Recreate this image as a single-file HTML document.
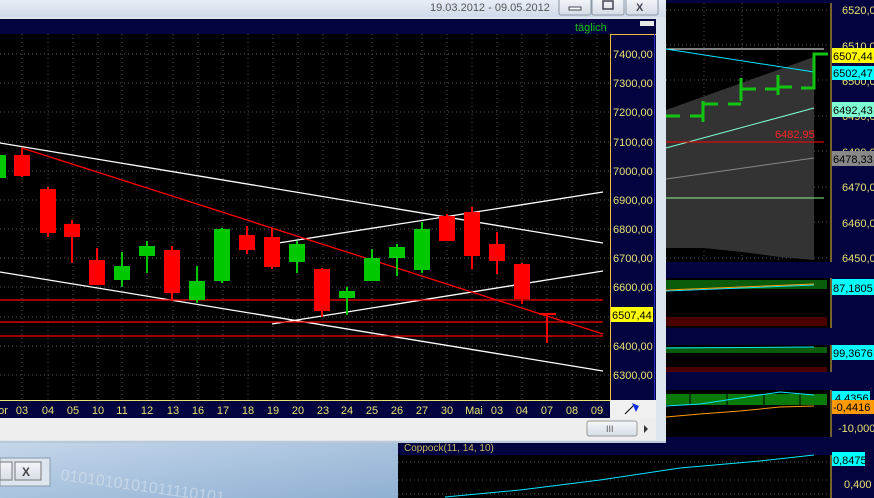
<!DOCTYPE html>
<html><head><meta charset="utf-8"><style>
html,body{margin:0;padding:0;background:#000;overflow:hidden}
svg{display:block}
text{font-family:"Liberation Sans",sans-serif}
</style></head><body>
<svg width="874" height="498" viewBox="0 0 874 498" xmlns="http://www.w3.org/2000/svg">
<defs>
<linearGradient id="tb" x1="0" y1="0" x2="0" y2="1"><stop offset="0" stop-color="#e8eef6"/><stop offset="1" stop-color="#cfdbe9"/></linearGradient>
<linearGradient id="bg" x1="0" y1="0" x2="1" y2="1"><stop offset="0" stop-color="#c4d6ea"/><stop offset="1" stop-color="#8fb0d2"/></linearGradient>
<linearGradient id="btn" x1="0" y1="0" x2="0" y2="1"><stop offset="0" stop-color="#f4f6f9"/><stop offset="1" stop-color="#d6dde6"/></linearGradient>
</defs>
<rect width="874" height="498" fill="#000"/>

<!-- RIGHT PANEL -->
<rect x="664" y="0" width="210" height="498" fill="#03033f"/>
<rect x="666" y="3" width="165" height="259" fill="#000"/>
<g stroke="#555" stroke-dasharray="1,3">
<line x1="704" y1="3" x2="704" y2="262"/><line x1="742" y1="3" x2="742" y2="262"/><line x1="778" y1="3" x2="778" y2="262"/>
<line x1="666" y1="10" x2="830" y2="10"/><line x1="666" y1="45" x2="830" y2="45"/><line x1="666" y1="80" x2="830" y2="80"/><line x1="666" y1="116" x2="830" y2="116"/><line x1="666" y1="151" x2="830" y2="151"/><line x1="666" y1="187" x2="830" y2="187"/><line x1="666" y1="222" x2="830" y2="222"/><line x1="666" y1="258" x2="830" y2="258"/>
</g>
<polygon points="666,110 814,57 814,260 780,257 742,252 704,248 666,248" fill="#333"/>
<line x1="666" y1="49" x2="824" y2="49" stroke="#fff" stroke-width="1"/>
<line x1="666" y1="49" x2="814" y2="72" stroke="#00e5ff" stroke-width="1"/>
<line x1="666" y1="148" x2="814" y2="108" stroke="#7fffd4" stroke-width="1"/>
<line x1="666" y1="142" x2="824" y2="142" stroke="#f00" stroke-width="1"/>
<line x1="666" y1="179" x2="814" y2="158" stroke="#888" stroke-width="1"/>
<line x1="666" y1="198" x2="824" y2="198" stroke="#90ee90" stroke-width="1"/>
<g stroke="#12c412" stroke-width="3" fill="none">
<path d="M666 116 H680 M690 116 H703 M703 101 V122 M703 104 H718 M728 104 H741 M741 78 V101 M741 89 H756 M765 89 H778 M778 75 V95 M778 87 H792 M801 88 H814 V54 H828"/>
</g>
<text x="775" y="138" fill="#f22" font-size="11">6482,95</text>
<rect x="831" y="0" width="43" height="262" fill="#03033f"/>
<line x1="831" y1="3" x2="831" y2="262" stroke="#e8c040"/>
<g fill="#e8e070" font-size="11">
<text x="842" y="14">6520,0</text><text x="842" y="50">6510,0</text><text x="842" y="85">6500,0</text><text x="842" y="120">6490,0</text><text x="842" y="156">6480,0</text><text x="842" y="191">6470,0</text><text x="842" y="227">6460,0</text><text x="842" y="262">6450,0</text>
</g>
<rect x="832" y="48" width="42" height="15" fill="#ffff00"/><text x="833" y="60" fill="#000" font-size="11">6507,44</text>
<rect x="832" y="66" width="42" height="14" fill="#00ffff"/><text x="833" y="77" fill="#000" font-size="11">6502,47</text>
<rect x="832" y="102" width="42" height="15" fill="#7fffd4"/><text x="833" y="114" fill="#000" font-size="11">6492,43</text>
<rect x="832" y="151" width="42" height="15" fill="#888"/><text x="833" y="163" fill="#000" font-size="11">6478,33</text>

<!-- chart 2 -->
<rect x="666" y="278" width="165" height="50" fill="#000"/>
<rect x="666" y="280" width="161" height="9" fill="#0a5c0a"/>
<rect x="666" y="317" width="161" height="9" fill="#4a0000"/>
<line x1="666" y1="291" x2="814" y2="285" stroke="#00e5ff"/>
<line x1="666" y1="290" x2="814" y2="284" stroke="#ff9900"/>
<rect x="832" y="279" width="42" height="16" fill="#00ffff"/><text x="833" y="292" fill="#000" font-size="11">87,1805</text>
<line x1="831" y1="278" x2="831" y2="328" stroke="#e8c040"/>
<!-- chart 3 -->
<rect x="666" y="345" width="165" height="27" fill="#000"/>
<rect x="666" y="347" width="161" height="6" fill="#0a5c0a"/>
<rect x="666" y="367" width="161" height="5" fill="#4a0000"/>
<line x1="666" y1="348" x2="814" y2="347" stroke="#00e5ff"/>
<rect x="832" y="345" width="42" height="15" fill="#00ffff"/><text x="833" y="357" fill="#000" font-size="11">99,3676</text>
<line x1="831" y1="345" x2="831" y2="372" stroke="#e8c040"/>
<!-- chart 4 -->
<rect x="666" y="390" width="165" height="47" fill="#000"/>
<rect x="666" y="394" width="161" height="11" fill="#0a7a0a"/>
<g stroke="#000"><line x1="690" y1="394" x2="690" y2="405"/><line x1="727" y1="394" x2="727" y2="405"/><line x1="764" y1="394" x2="764" y2="405"/><line x1="800" y1="394" x2="800" y2="405"/></g>
<polyline points="666,406 700,404 740,398 780,392 814,395" fill="none" stroke="#00e5ff"/>
<polyline points="666,417 700,414 740,411 780,407 814,406" fill="none" stroke="#ff9900"/>
<rect x="832" y="391" width="38" height="12" fill="#00ffff"/><text x="835" y="402" fill="#000" font-size="11">4,4356</text>
<rect x="832" y="400" width="42" height="14" fill="#ff9900"/><text x="833" y="411" fill="#000" font-size="11">-0,4416</text>
<text x="838" y="432" fill="#e8e070" font-size="11">-10,000</text>
<line x1="831" y1="390" x2="831" y2="437" stroke="#e8c040"/>

<!-- coppock -->
<rect x="398" y="443" width="476" height="55" fill="#03033f"/>
<text x="404" y="451" fill="#c8b860" font-size="10">Coppock(11, 14, 10)</text>
<rect x="398" y="455" width="433" height="43" fill="#000"/>
<g stroke="#555" stroke-dasharray="1,3"><line x1="398" y1="462" x2="830" y2="462"/><line x1="398" y1="480" x2="830" y2="480"/><line x1="398" y1="494" x2="830" y2="494"/></g>
<polyline points="445,497 520,490 600,480 680,468 760,461 814,455" fill="none" stroke="#00e5ff"/>
<line x1="831" y1="455" x2="831" y2="498" stroke="#e8c040"/>
<rect x="832" y="452" width="33" height="14" fill="#00ffff"/><text x="833" y="464" fill="#000" font-size="11">0,8475</text>
<text x="844" y="488" fill="#e8e070" font-size="11">0,400</text>

<!-- desktop bg lower-left -->
<rect x="0" y="443" width="398" height="55" fill="url(#bg)"/>
<text x="60" y="480" fill="#d8e4f0" font-size="16" opacity=".6" transform="rotate(8 60 480)">0101010101011110101</text>
<rect x="0" y="458" width="50" height="28" fill="#dde6ef" stroke="#8899aa"/>
<rect x="0" y="462" width="12" height="18" fill="url(#btn)" stroke="#777"/>
<rect x="15" y="462" width="26" height="18" fill="url(#btn)" stroke="#777"/>
<text x="22" y="476" fill="#444" font-size="12" font-weight="bold">X</text>

<!-- MAIN WINDOW -->
<rect x="0" y="0" width="666" height="443" fill="#dde6ef"/>
<rect x="0" y="0" width="666" height="17" fill="url(#tb)"/>
<text x="430" y="11" fill="#555" font-size="11">19.03.2012 - 09.05.2012</text>
<rect x="559" y="-2" width="32" height="17" rx="2" fill="url(#btn)" stroke="#8a97a6"/>
<rect x="569" y="7" width="12" height="3" fill="#fff" stroke="#445"/>
<rect x="592" y="-2" width="32" height="17" rx="2" fill="url(#btn)" stroke="#8a97a6"/>
<rect x="603" y="1" width="10" height="8" fill="none" stroke="#445" stroke-width="1.5"/>
<rect x="626" y="-2" width="32" height="17" rx="2" fill="url(#btn)" stroke="#8a97a6"/>
<text x="636" y="11" fill="#445" font-size="11" font-weight="bold">X</text>
<rect x="0" y="19" width="656" height="15" fill="#03033f"/>
<text x="575" y="31" fill="#10c010" font-size="11">täglich</text>
<rect x="640" y="21" width="14" height="5" fill="#e8e8e8"/>
<rect x="0" y="34" width="610" height="366" fill="#000"/>
<g stroke="#555" stroke-dasharray="1,3">
<line x1="22" y1="34" x2="22" y2="400"/><line x1="48" y1="34" x2="48" y2="400"/><line x1="73" y1="34" x2="73" y2="400"/><line x1="98" y1="34" x2="98" y2="400"/><line x1="122" y1="34" x2="122" y2="400"/><line x1="147" y1="34" x2="147" y2="400"/><line x1="173" y1="34" x2="173" y2="400"/><line x1="198" y1="34" x2="198" y2="400"/><line x1="223" y1="34" x2="223" y2="400"/><line x1="248" y1="34" x2="248" y2="400"/><line x1="273" y1="34" x2="273" y2="400"/><line x1="298" y1="34" x2="298" y2="400"/><line x1="323" y1="34" x2="323" y2="400"/><line x1="347" y1="34" x2="347" y2="400"/><line x1="372" y1="34" x2="372" y2="400"/><line x1="397" y1="34" x2="397" y2="400"/><line x1="422" y1="34" x2="422" y2="400"/><line x1="447" y1="34" x2="447" y2="400"/><line x1="472" y1="34" x2="472" y2="400"/><line x1="497" y1="34" x2="497" y2="400"/><line x1="522" y1="34" x2="522" y2="400"/><line x1="547" y1="34" x2="547" y2="400"/><line x1="572" y1="34" x2="572" y2="400"/><line x1="597" y1="34" x2="597" y2="400"/>
<line x1="0" y1="54" x2="610" y2="54"/><line x1="0" y1="83" x2="610" y2="83"/><line x1="0" y1="112" x2="610" y2="112"/><line x1="0" y1="142" x2="610" y2="142"/><line x1="0" y1="171" x2="610" y2="171"/><line x1="0" y1="200" x2="610" y2="200"/><line x1="0" y1="229" x2="610" y2="229"/><line x1="0" y1="258" x2="610" y2="258"/><line x1="0" y1="287" x2="610" y2="287"/><line x1="0" y1="317" x2="610" y2="317"/><line x1="0" y1="346" x2="610" y2="346"/><line x1="0" y1="375" x2="610" y2="375"/>
</g>
<!-- trend lines -->
<g stroke="#fff" stroke-width="1.3">
<line x1="0" y1="143" x2="603" y2="243"/>
<line x1="0" y1="272" x2="603" y2="371"/>
<line x1="272" y1="244" x2="603" y2="192"/>
<line x1="272" y1="324" x2="603" y2="271"/>
</g>
<g stroke="#f00" stroke-width="1.3">
<line x1="22" y1="148" x2="603" y2="334"/>
<line x1="0" y1="300" x2="603" y2="300"/>
<line x1="0" y1="322" x2="603" y2="322"/>
<line x1="0" y1="336" x2="603" y2="336"/>
</g>
<!-- candles -->
<g fill="#f00" stroke="#f00" stroke-width="2">
<line x1="22" y1="148" x2="22" y2="177"/><rect x="14" y="155" width="16" height="21" stroke="none"/>
<line x1="48" y1="187" x2="48" y2="237"/><rect x="40" y="189" width="16" height="44" stroke="none"/>
<line x1="72" y1="220" x2="72" y2="263"/><rect x="64" y="224" width="16" height="13" stroke="none"/>
<line x1="97" y1="248" x2="97" y2="285"/><rect x="89" y="260" width="16" height="25" stroke="none"/>
<line x1="172" y1="246" x2="172" y2="301"/><rect x="164" y="250" width="16" height="43" stroke="none"/>
<line x1="247" y1="226" x2="247" y2="254"/><rect x="239" y="235" width="16" height="15" stroke="none"/>
<line x1="272" y1="228" x2="272" y2="269"/><rect x="264" y="237" width="16" height="30" stroke="none"/>
<line x1="322" y1="268" x2="322" y2="317"/><rect x="314" y="269" width="16" height="42" stroke="none"/>
<line x1="447" y1="214" x2="447" y2="241"/><rect x="439" y="216" width="16" height="25" stroke="none"/>
<line x1="472" y1="207" x2="472" y2="269"/><rect x="464" y="212" width="16" height="44" stroke="none"/>
<line x1="497" y1="232" x2="497" y2="274"/><rect x="489" y="244" width="16" height="17" stroke="none"/>
<line x1="522" y1="263" x2="522" y2="304"/><rect x="514" y="264" width="16" height="35" stroke="none"/>
<line x1="547" y1="314" x2="547" y2="343"/><line x1="539" y1="314" x2="556" y2="314"/>
</g>
<g fill="#00c800" stroke="#00c800" stroke-width="2">
<rect x="0" y="155" width="6" height="23" stroke="none"/>
<line x1="122" y1="252" x2="122" y2="287"/><rect x="114" y="266" width="16" height="14" stroke="none"/>
<line x1="147" y1="241" x2="147" y2="273"/><rect x="139" y="246" width="16" height="10" stroke="none"/>
<line x1="197" y1="266" x2="197" y2="303"/><rect x="189" y="281" width="16" height="19" stroke="none"/>
<line x1="222" y1="228" x2="222" y2="283"/><rect x="214" y="229" width="16" height="52" stroke="none"/>
<line x1="297" y1="241" x2="297" y2="273"/><rect x="289" y="244" width="16" height="18" stroke="none"/>
<line x1="347" y1="287" x2="347" y2="315"/><rect x="339" y="291" width="16" height="7" stroke="none"/>
<line x1="372" y1="249" x2="372" y2="281"/><rect x="364" y="258" width="16" height="23" stroke="none"/>
<line x1="397" y1="244" x2="397" y2="276"/><rect x="389" y="247" width="16" height="11" stroke="none"/>
<line x1="422" y1="222" x2="422" y2="273"/><rect x="414" y="229" width="16" height="41" stroke="none"/>
</g>
<!-- y axis -->
<rect x="610" y="34" width="46" height="366" fill="#03033f"/>
<line x1="610.5" y1="34" x2="610.5" y2="400" stroke="#e8c040"/>
<line x1="610" y1="34.5" x2="656" y2="34.5" stroke="#e8c040"/>
<line x1="654.5" y1="34" x2="654.5" y2="400" stroke="#2030c0"/>
<g fill="#e8e070" font-size="11">
<text x="613" y="58">7400,00</text><text x="613" y="87">7300,00</text><text x="613" y="116">7200,00</text><text x="613" y="146">7100,00</text><text x="613" y="175">7000,00</text><text x="613" y="204">6900,00</text><text x="613" y="233">6800,00</text><text x="613" y="262">6700,00</text><text x="613" y="291">6600,00</text><text x="613" y="350">6400,00</text><text x="613" y="379">6300,00</text>
</g>
<rect x="611" y="307" width="42" height="15" fill="#ffff00"/><text x="612" y="319" fill="#000" font-size="11">6507,44</text>
<!-- x axis -->
<rect x="0" y="400" width="610" height="18" fill="#03033f"/>
<line x1="0" y1="400.5" x2="610" y2="400.5" stroke="#e8e070"/>
<g fill="#e8e070" font-size="11" text-anchor="middle">
<text x="3" y="414">or</text><text x="22" y="414">03</text><text x="48" y="414">04</text><text x="73" y="414">05</text><text x="98" y="414">10</text><text x="122" y="414">11</text><text x="147" y="414">12</text><text x="173" y="414">13</text><text x="198" y="414">16</text><text x="223" y="414">17</text><text x="248" y="414">18</text><text x="273" y="414">19</text><text x="298" y="414">20</text><text x="323" y="414">23</text><text x="347" y="414">24</text><text x="372" y="414">25</text><text x="397" y="414">26</text><text x="422" y="414">27</text><text x="447" y="414">30</text><text x="474" y="414">Mai</text><text x="497" y="414">03</text><text x="522" y="414">04</text><text x="547" y="414">07</text><text x="572" y="414">08</text><text x="597" y="414">09</text>
</g>
<rect x="610" y="400" width="46" height="18" fill="#f0f0f0"/>
<path d="M625 414 L634 405" stroke="#000"/><path d="M632 403 L639 406 L636 412 Z" fill="#1030e0"/>
<rect x="0" y="418" width="656" height="22" fill="#eeeeee"/>
<rect x="587" y="421" width="50" height="15" rx="2" fill="url(#btn)" stroke="#999"/>
<text x="606" y="432" fill="#555" font-size="9">III</text>
<path d="M644 425 L648 429 L644 433 Z" fill="#333"/>
<rect x="0" y="441" width="666" height="2" fill="#bcc8d6"/>
</svg>
</body></html>
